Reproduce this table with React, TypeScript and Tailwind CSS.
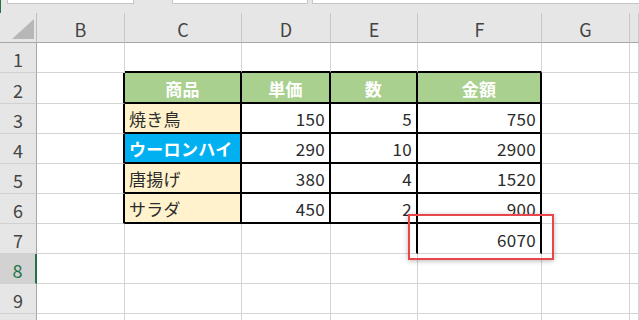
import React from "react";

type Cell = {
  text?: string;
  align?: "left" | "right" | "center";
  bg?: string;
  bold?: boolean;
  white?: boolean;
};

const cols = ["B", "C", "D", "E", "F", "G", ""];

// sheet content, keyed by row number then column letter
const sheet: Record<number, Record<string, Cell>> = {
  2: {
    C: { text: "商品", align: "center", bg: "bg-[#a9d08e]", bold: true, white: true },
    D: { text: "単価", align: "center", bg: "bg-[#a9d08e]", bold: true, white: true },
    E: { text: "数", align: "center", bg: "bg-[#a9d08e]", bold: true, white: true },
    F: { text: "金額", align: "center", bg: "bg-[#a9d08e]", bold: true, white: true },
  },
  3: {
    C: { text: "焼き鳥", bg: "bg-[#fff2cc]" },
    D: { text: "150", align: "right" },
    E: { text: "5", align: "right" },
    F: { text: "750", align: "right" },
  },
  4: {
    C: { text: "ウーロンハイ", bg: "bg-[#00b0f0]", bold: true, white: true },
    D: { text: "290", align: "right" },
    E: { text: "10", align: "right" },
    F: { text: "2900", align: "right" },
  },
  5: {
    C: { text: "唐揚げ", bg: "bg-[#fff2cc]" },
    D: { text: "380", align: "right" },
    E: { text: "4", align: "right" },
    F: { text: "1520", align: "right" },
  },
  6: {
    C: { text: "サラダ", bg: "bg-[#fff2cc]" },
    D: { text: "450", align: "right" },
    E: { text: "2", align: "right" },
    F: { text: "900", align: "right" },
  },
  7: {
    F: { text: "6070", align: "right" },
  },
};

const inTable = (c: string) => ["C", "D", "E", "F"].includes(c);

function rightBorder(r: number, c: string) {
  if (r >= 2 && r <= 6 && ["B", "C", "D", "E", "F"].includes(c)) return "border-r-2 border-r-black";
  if (r === 7 && (c === "E" || c === "F")) return "border-r-2 border-r-black";
  return "border-r border-r-[#d4d4d4]";
}

function bottomBorder(r: number, c: string) {
  if (r >= 1 && r <= 6 && inTable(c)) return "border-b-2 border-b-black";
  return "border-b border-b-[#d4d4d4]";
}

function GridCell({ r, c }: { r: number; c: string }) {
  const cell = sheet[r]?.[c] ?? {};
  const align =
    cell.align === "right" ? "justify-end" : cell.align === "center" ? "justify-center" : "justify-start";
  return (
    <div
      className={`flex items-center px-[4px] pt-[1px] ${align} ${cell.bg ?? "bg-white"} ${rightBorder(r, c)} ${bottomBorder(r, c)} ${
        cell.white ? "text-white" : "text-[#2b2b2b]"
      } ${cell.bold ? "font-bold" : ""} whitespace-nowrap tracking-[0.3px]`}
    >
      {cell.text}
    </div>
  );
}

export default function App() {
  const rows = [1, 2, 3, 4, 5, 6, 7, 8, 9, 10];
  return (
    <div
      className="relative w-[639px] h-[320px] overflow-hidden bg-white text-[17px] leading-none"
      style={{ fontFamily: '"Noto Sans CJK JP", "Noto Sans", sans-serif' }}
    >
      {/* formula bar bottom edge */}
      <div className="flex h-[13px] bg-[#e6e6e6] border-l border-l-[#217346]">
        <div className="ml-[6px] w-[127px] h-[4px] bg-white border border-t-0 border-[#c6c6c6]" />
        <div className="ml-[38px] w-[136px] h-[4px] bg-white border border-t-0 border-[#c6c6c6]" />
        <div className="ml-[4px] flex-1 h-[4px] bg-white border border-t-0 border-r-0 border-[#c6c6c6]" />
      </div>

      <div className="grid grid-cols-[37px_88px_117px_89px_87px_124px_88px_1fr] grid-rows-[30px_30px_31px_repeat(8,30px)]">
        {/* column headers */}
        <div className="relative bg-[#e6e6e6] border-r border-r-[#bcbcbc] border-b border-b-[#a6a6a6]">
          <svg className="absolute left-[12px] top-[6px]" width="22" height="20" viewBox="0 0 22 20">
            <polygon points="22,0 22,20 0,20" fill="#b7b7b7" />
          </svg>
        </div>
        {cols.map((c, i) => (
          <div
            key={`h${i}`}
            className="flex items-center justify-center pt-[2px] bg-[#e6e6e6] text-[18px] text-[#444] border-r border-r-[#c8c8c8] border-b border-b-[#a6a6a6]"
          >
            {c}
          </div>
        ))}

        {rows.map((r) => (
          <React.Fragment key={r}>
            <div
              className={`flex items-center justify-center pt-[3px] text-[18px] border-b border-b-[#d0d0d0] ${
                r === 8
                  ? "bg-[#d2d2d2] text-[#217346] border-r-2 border-r-[#217346]"
                  : "bg-[#e6e6e6] text-[#444] border-r border-r-[#a6a6a6]"
              }`}
            >
              {r < 10 ? r : ""}
            </div>
            {cols.map((c, i) => (
              <GridCell key={`${r}-${i}`} r={r} c={c || "H"} />
            ))}
          </React.Fragment>
        ))}
      </div>

      {/* highlight around the total */}
      <div className="absolute left-[408px] top-[214px] w-[146px] h-[46px] border-2 border-[#e8464b] shadow-[0_1px_5px_rgba(0,0,0,0.28)]" />
    </div>
  );
}
